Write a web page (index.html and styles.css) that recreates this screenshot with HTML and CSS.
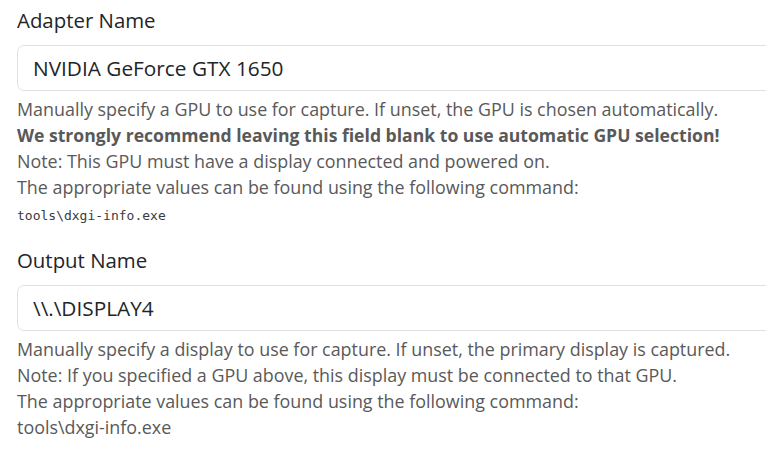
FILE: index.html
```html
<!DOCTYPE html>
<html>
  <head>
    <title>Capture Settings</title>
    <link rel="stylesheet" href="styles.css">
  </head>
  <body>
    <main>
      <div class="field">
        <label class="form-label" for="adapter_name">Adapter Name</label>
        <input type="text" class="form-control" id="adapter_name" value="NVIDIA GeForce GTX 1650">
        <div class="form-text">
          Manually specify a GPU to use for capture. If unset, the GPU is chosen automatically.<br>
          <b>We strongly recommend leaving this field blank to use automatic GPU selection!</b><br>
          Note: This GPU must have a display connected and powered on.<br>
          The appropriate values can be found using the following command:<br>
          <code>tools\dxgi-info.exe</code>
        </div>
      </div>
      <div class="field">
        <label class="form-label" for="output_name">Output Name</label>
        <input type="text" class="form-control" id="output_name" value="\\.\DISPLAY4">
        <div class="form-text">
          Manually specify a display to use for capture. If unset, the primary display is captured.<br>
          Note: If you specified a GPU above, this display must be connected to that GPU.<br>
          The appropriate values can be found using the following command:<br>
          tools\dxgi-info.exe
        </div>
      </div>
    </main>
  </body>
</html>
```

FILE: styles.css
```css
html, body {
  margin: 0;
  padding: 0;
  background: #ffffff;
  overflow: hidden;
}

body {
  font: normal 20px "Open Sans", "Noto Sans", sans-serif;
  line-height: 1.5;
  color: #212529;
}

main {
  padding: 5px 0 0 17px;
  width: 749px;
  overflow: hidden;
}

.field {
  margin-bottom: 19px;
}

.form-label {
  display: block;
  margin-bottom: 10px;
  font-size: 20.4px;
  line-height: 30px;
}

.form-control {
  display: block;
  width: 800px;
  height: 46px;
  padding: 7px 15px;
  margin: 0;
  font: inherit;
  font-size: 20.8px;
  color: #212529;
  background: #ffffff;
  border: 1px solid #dee2e6;
  border-radius: 7px;
  box-sizing: border-box;
  outline: none;
}

.form-text {
  margin-top: 5px;
  font-size: 17.9px;
  line-height: 26px;
  color: #595959;
  white-space: nowrap;
}

.form-text b {
  font-size: 17.6px;
  font-weight: 700;
  line-height: 26px;
}

code {
  font-family: "DejaVu Sans Mono", monospace;
  font-size: 13px;
  line-height: 1;
  color: #3a3a3a;
}
```
